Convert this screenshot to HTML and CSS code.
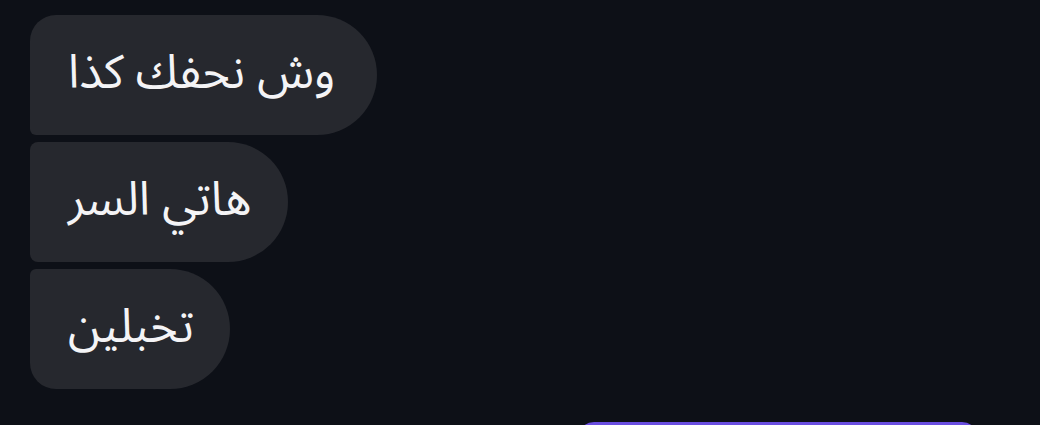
FILE: index.html
```html
<!DOCTYPE html>
<html lang="ar">
<head>
<meta charset="utf-8">
<link rel="stylesheet" href="styles.css">
</head>
<body>
<div class="chat">
  <div class="bubble in first" dir="rtl">وش نحفك كذا</div>
  <div class="bubble in middle" dir="rtl">هاتي السر</div>
  <div class="bubble in last" dir="rtl">تخبلين</div>
  <div class="bubble out" dir="rtl">&nbsp;</div>
</div>
</body>
</html>
```

FILE: styles.css
```css
html, body {
  margin: 0;
  padding: 0;
  background: #0d1017;
  height: 425px;
  overflow: hidden;
}
.chat {
  display: flex;
  flex-direction: column;
  align-items: flex-start;
  gap: 7px;
  padding: 15px 0 0 30px;
}
.bubble {
  box-sizing: border-box;
  height: 120px;
  flex-shrink: 0;
  display: flex;
  align-items: center;
  padding: 0 42px 4px 38px;
  font-family: "Noto Sans Arabic", "DejaVu Sans", sans-serif;
  font-size: 47px;
  color: #f4f4f6;
  white-space: nowrap;
}
.in {
  background: #26282e;
  border-radius: 8px 60px 60px 8px;
}
.in.middle,
.in.last {
  padding-right: 36px;
}
.in.first {
  border-radius: 26px 60px 60px 6px;
}
.in.last {
  border-radius: 6px 60px 60px 26px;
}
.out {
  align-self: flex-end;
  margin-right: 62px;
  margin-top: 26px;
  width: 400px;
  background: #6a4ee0;
  border-radius: 16px 16px 8px 16px;
}
```
